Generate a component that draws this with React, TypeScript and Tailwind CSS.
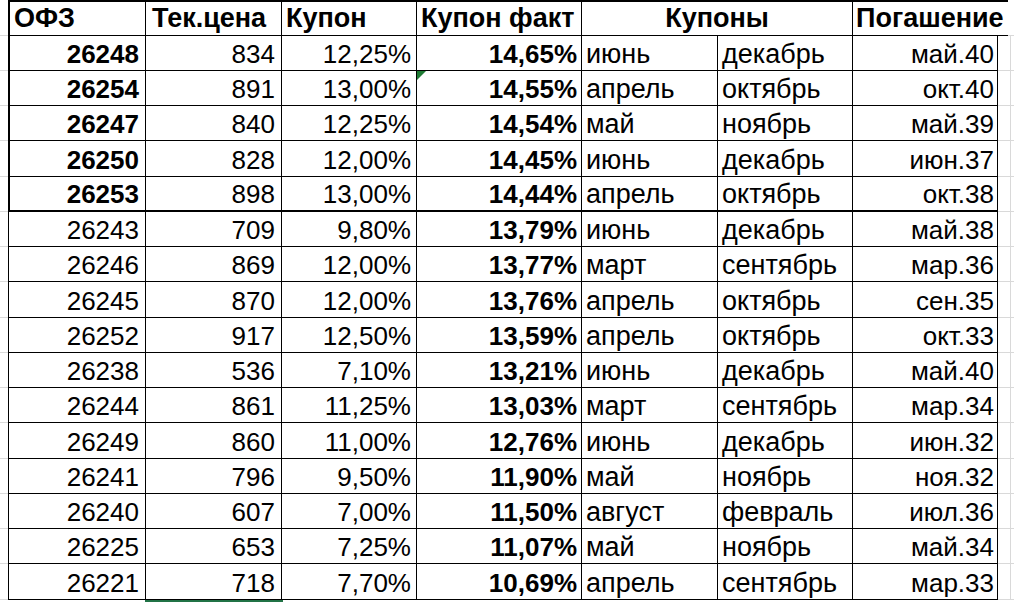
import React from 'react';

interface Bond {
  code: string;
  price: string;
  coupon: string;
  real: string;
  m1: string;
  m2: string;
  maturity: string;
  top?: boolean;
}

const bonds: Bond[] = [
  { code: '26248', price: '834', coupon: '12,25%', real: '14,65%', m1: 'июнь', m2: 'декабрь', maturity: 'май.40', top: true },
  { code: '26254', price: '891', coupon: '13,00%', real: '14,55%', m1: 'апрель', m2: 'октябрь', maturity: 'окт.40', top: true },
  { code: '26247', price: '840', coupon: '12,25%', real: '14,54%', m1: 'май', m2: 'ноябрь', maturity: 'май.39', top: true },
  { code: '26250', price: '828', coupon: '12,00%', real: '14,45%', m1: 'июнь', m2: 'декабрь', maturity: 'июн.37', top: true },
  { code: '26253', price: '898', coupon: '13,00%', real: '14,44%', m1: 'апрель', m2: 'октябрь', maturity: 'окт.38', top: true },
  { code: '26243', price: '709', coupon: '9,80%', real: '13,79%', m1: 'июнь', m2: 'декабрь', maturity: 'май.38' },
  { code: '26246', price: '869', coupon: '12,00%', real: '13,77%', m1: 'март', m2: 'сентябрь', maturity: 'мар.36' },
  { code: '26245', price: '870', coupon: '12,00%', real: '13,76%', m1: 'апрель', m2: 'октябрь', maturity: 'сен.35' },
  { code: '26252', price: '917', coupon: '12,50%', real: '13,59%', m1: 'апрель', m2: 'октябрь', maturity: 'окт.33' },
  { code: '26238', price: '536', coupon: '7,10%', real: '13,21%', m1: 'июнь', m2: 'декабрь', maturity: 'май.40' },
  { code: '26244', price: '861', coupon: '11,25%', real: '13,03%', m1: 'март', m2: 'сентябрь', maturity: 'мар.34' },
  { code: '26249', price: '860', coupon: '11,00%', real: '12,76%', m1: 'июнь', m2: 'декабрь', maturity: 'июн.32' },
  { code: '26241', price: '796', coupon: '9,50%', real: '11,90%', m1: 'май', m2: 'ноябрь', maturity: 'ноя.32' },
  { code: '26240', price: '607', coupon: '7,00%', real: '11,50%', m1: 'август', m2: 'февраль', maturity: 'июл.36' },
  { code: '26225', price: '653', coupon: '7,25%', real: '11,07%', m1: 'май', m2: 'ноябрь', maturity: 'май.34' },
  { code: '26221', price: '718', coupon: '7,70%', real: '10,69%', m1: 'апрель', m2: 'сентябрь', maturity: 'мар.33' },
];

// excel rows are 35/36 px alternately
const rowHeights = ['h-[35px]', 'h-[35px]', 'h-[35px]', 'h-[36px]'];

const cell = 'flex items-end shrink-0 border-r border-b border-black leading-none whitespace-nowrap';

const App: React.FC = () => {
  return (
    <div className="w-[1014px] h-[602px] bg-white overflow-hidden text-black text-[26px] font-['Liberation_Sans',Arial,sans-serif]">
      {/* header */}
      <div className="flex h-[36px]">
        <div className="w-[8px] shrink-0 border-b border-[#d9d9d9]" />
        <div className="flex items-end shrink-0 w-[1000px] border-t-2 border-l-2 border-black text-[27px] font-bold leading-none">
          <div className="flex items-end h-full w-[136px] px-[4px] pb-[3px] border-r border-b border-black">ОФЗ</div>
          <div className="flex items-end h-full w-[136px] px-[6px] pb-[3px] border-r border-b border-black">Тек.цена</div>
          <div className="flex items-end h-full w-[135px] px-[4px] pb-[3px] border-r border-b border-black">Купон</div>
          <div className="flex items-end h-full w-[165px] px-[4px] pb-[3px] border-r border-b border-black">Купон факт</div>
          <div className="flex items-end justify-center h-full w-[271px] pb-[3px] border-r border-b border-black">Купоны</div>
          <div className="flex items-end h-full w-[155px] pl-[3px] pb-[3px] border-b border-black whitespace-nowrap">Погашение</div>
        </div>
        <div className="flex-1 border-b border-[#d9d9d9]" />
      </div>

      {bonds.map((b, i) => {
        const bb = i === 4 ? 'border-b-2' : '';
        const h = rowHeights[i % 4];
        return (
          <div key={b.code} className={`flex ${h}`}>
            <div className="w-[8px] shrink-0 border-b border-[#d9d9d9]" />
            <div className={`${cell} ${bb} w-[138px] justify-end pr-[6px] pb-[3px] ${b.top ? 'border-l-2 font-bold' : 'border-l'}`}>{b.code}</div>
            <div className={`${cell} ${bb} w-[136px] justify-end pr-[6px] pb-[3px]`}>{b.price}</div>
            <div className={`${cell} ${bb} w-[135px] justify-end pr-[5px] pb-[3px]`}>{b.coupon}</div>
            <div className={`${cell} ${bb} w-[165px] justify-end pr-[4px] pb-[3px] font-bold relative`}>
              {i === 1 && (
                <span className="absolute left-0 top-0 w-0 h-0 border-t-[9px] border-r-[9px] border-t-[#1e7b34] border-r-transparent" />
              )}
              {b.real}
            </div>
            <div className={`${cell} ${bb} w-[136px] pl-[4px] pb-[2px] text-[27px]`}>{b.m1}</div>
            <div className={`${cell} ${bb} w-[135px] pl-[4px] pb-[2px] text-[27px]`}>{b.m2}</div>
            <div className={`${cell} ${bb} w-[145px] justify-end pr-[3px] pb-[3px]`}>{b.maturity}</div>
            <div className="w-[13px] shrink-0 border-b border-r border-[#d9d9d9]" />
            <div className="flex-1 border-b border-[#d9d9d9]" />
          </div>
        );
      })}

      {/* selection edge of the active cell below */}
      <div className="flex">
        <div className="w-[145px] shrink-0" />
        <div className="w-[138px] h-[2px] bg-[#217346]" />
      </div>
    </div>
  );
};

export default App;
